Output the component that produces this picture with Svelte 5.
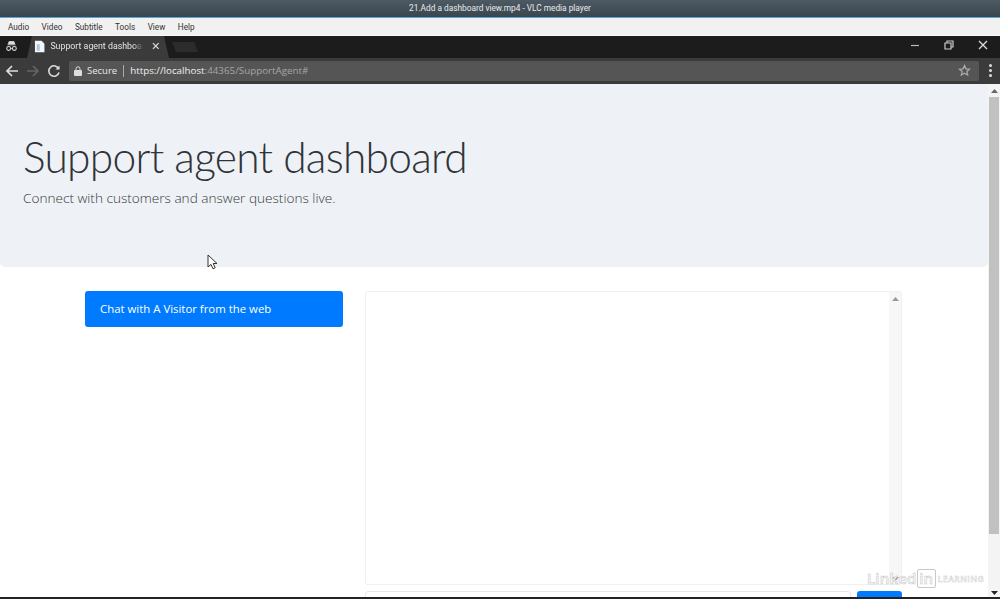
<script lang="ts">
    const menus = ['Audio', 'Video', 'Subtitle', 'Tools', 'View', 'Help'];
</script>

<div class="player">
    <header class="titlebar">21.Add a dashboard view.mp4 - VLC media player</header>

    <nav class="menubar">
        {#each menus as item}
            <span>{item}</span>
        {/each}
    </nav>

    <div class="browser">
        <div class="tabstrip">
            <svg class="incognito" width="13" height="12" viewBox="0 0 16 14" fill="none" stroke="#ddd">
                <path d="M3 5.5h10M5 1.5h6l1 3H4z" fill="#ddd" />
                <circle cx="4.5" cy="10" r="2.4" stroke-width="1.3" />
                <circle cx="11.5" cy="10" r="2.4" stroke-width="1.3" />
                <path d="M7 10h2" />
            </svg>
            <div class="tab">
                <svg width="12" height="13" viewBox="0 0 12 13">
                    <path d="M1 .5h7l3 3v9H1z" fill="#f4f6f8" />
                    <path d="M3 4h3v7H3z" fill="#a9c6e4" />
                </svg>
                <span class="tab-title">Support agent dashboard</span>
                <svg class="tab-close" width="8" height="8" viewBox="0 0 8 8" stroke="#ddd" stroke-width="1.3">
                    <path d="M1 1l6 6M7 1L1 7" />
                </svg>
            </div>
            <div class="newtab"></div>
            <div class="window-controls">
                <svg width="10" height="10" viewBox="0 0 10 10" stroke="#bbb" stroke-width="1.2">
                    <path d="M1 5.5h8" />
                </svg>
                <svg width="10" height="10" viewBox="0 0 10 10" fill="none" stroke="#ccc" stroke-width="1.2">
                    <path d="M1 3h6v6H1zM3 3V1h6v6H7" />
                </svg>
                <svg width="10" height="10" viewBox="0 0 10 10" stroke="#ddd" stroke-width="1.3">
                    <path d="M1 1l8 8M9 1l-8 8" />
                </svg>
            </div>
        </div>

        <div class="toolbar">
            <svg width="14" height="14" viewBox="0 0 14 14" fill="none" stroke="#ddd" stroke-width="1.7">
                <path d="M13 7H2M7 2L2 7l5 5" />
            </svg>
            <svg width="14" height="14" viewBox="0 0 14 14" fill="none" stroke="#666" stroke-width="1.6">
                <path d="M1 7h11M7 2l5 5-5 5" />
            </svg>
            <svg width="14" height="14" viewBox="0 0 14 14" fill="none" stroke="#ddd" stroke-width="1.6">
                <path d="M11.8 5A5.2 5.2 0 1 0 12 8.5" />
                <path d="M12.5 1.5v4h-4z" fill="#ddd" stroke="none" />
            </svg>
            <div class="omnibox">
                <svg width="8" height="10" viewBox="0 0 8 10">
                    <path d="M2 4V2.8a2 2 0 0 1 4 0V4" fill="none" stroke="#ddd" />
                    <rect y="4" width="8" height="6" rx="1" fill="#ddd" />
                </svg>
                <span class="secure">Secure</span>
                <span class="sep"></span>
                <span class="url">https://localhost<span class="dim">:44365/SupportAgent#</span></span>
                <svg class="star" width="13" height="13" viewBox="0 0 24 24" fill="none" stroke="#aaa" stroke-width="2.4">
                    <path d="M12 3l2.8 6 6.4.7-4.8 4.3 1.4 6.4L12 17.1l-5.8 3.3 1.4-6.4-4.8-4.3 6.4-.7z" />
                </svg>
            </div>
            <div class="kebab"><i></i><i></i><i></i></div>
        </div>
    </div>

    <div class="viewport">
        <main class="page">
            <section class="jumbotron">
                <h1>Support agent dashboard</h1>
                <p>Connect with customers and answer questions live.</p>
            </section>

            <div class="row">
                <div class="sidebar">
                    <button type="button" class="btn-chat">Chat with A Visitor from the web</button>
                </div>
                <div class="chat">
                    <div class="messages">
                        <div class="msg-scroll">
                            <svg width="7" height="4" viewBox="0 0 7 4"><path d="M3.5 0L7 4H0z" fill="#999" /></svg>
                            <svg width="7" height="4" viewBox="0 0 7 4"><path d="M0 0h7L3.5 4z" fill="#999" /></svg>
                        </div>
                    </div>
                    <form class="composer">
                        <input type="text" />
                        <button type="button" class="btn-send"></button>
                    </form>
                </div>
            </div>
        </main>

        <aside class="scrollbar">
            <svg width="7" height="4" viewBox="0 0 7 4"><path d="M3.5 0L7 4H0z" fill="#666" /></svg>
            <div class="thumb"></div>
            <svg width="7" height="4" viewBox="0 0 7 4"><path d="M0 0h7L3.5 4z" fill="#222" /></svg>
        </aside>

        <svg class="cursor" width="11" height="16" viewBox="0 0 11 16">
            <path d="M1 1v12l3-2.6 2 4.4 2.2-1-2-4.3H10z" fill="#fff" stroke="#333" />
        </svg>

        <div class="watermark">
            <span>Linked</span><span class="in">in</span><span class="learning">LEARNING</span>
        </div>
    </div>

    <div class="bottom-edge"></div>
</div>

<style>
    :global(body) {
        margin: 0;
        overflow: hidden;
    }

    .player {
        display: flex;
        flex-direction: column;
        width: 1000px;
        height: 599px;
        overflow: hidden;
        background: #fff;
        font-family: "Open Sans", "Noto Sans", sans-serif;
    }

    .titlebar {
        height: 17px;
        flex-shrink: 0;
        line-height: 17px;
        text-align: center;
        font-family: Roboto, sans-serif;
        font-size: 8.3px;
        color: #e8ecef;
        background: linear-gradient(#4e5a63, #3a464e);
        border-bottom: 1px solid #5ba6d8;
    }

    .menubar {
        display: flex;
        gap: 12.5px;
        height: 17px;
        flex-shrink: 0;
        padding-left: 8px;
        align-items: center;
        font-family: Roboto, sans-serif;
        font-size: 8.2px;
        color: #333;
        background: #f1f1f1;
        border-bottom: 1px solid #fafafa;
    }

    .browser {
        flex-shrink: 0;
        background: #1c1c1c;
    }

    .tabstrip {
        display: flex;
        align-items: flex-end;
        height: 22px;
        padding-left: 5px;
        overflow: hidden;
    }

    .incognito {
        margin: 0 9px 6px 0;
    }

    .tab {
        display: flex;
        align-items: center;
        gap: 5px;
        width: 142px;
        height: 22px;
        box-sizing: border-box;
        padding: 0 9px 2px 7px;
        background: #3b3b3b;
        clip-path: polygon(0 100%, 5px 0, calc(100% - 5px) 0, 100% 100%);
    }

    .tab-title {
        width: 98px;
        overflow: hidden;
        white-space: nowrap;
        font-family: Roboto, sans-serif;
        font-size: 8.8px;
        color: #e4e4e4;
        mask-image: linear-gradient(90deg, #000 90%, transparent);
    }

    .tab-close {
        margin-left: 4px;
    }

    .newtab {
        width: 22px;
        height: 10px;
        margin: 0 0 6px 5px;
        background: #2c2c2c;
        transform: skewX(20deg);
    }

    .window-controls {
        display: flex;
        gap: 24px;
        margin-left: auto;
        padding: 0 12px 8px 0;
    }

    .toolbar {
        display: flex;
        align-items: center;
        gap: 7px;
        height: 25px;
        padding: 0 8px 1px 5px;
        background: #3b3b3b;
    }

    .omnibox {
        display: flex;
        align-items: center;
        flex: 1;
        height: 20px;
        margin-left: 1px;
        padding: 0 8px 0 5px;
        border-radius: 2px;
        background: #555;
        font-size: 9.5px;
    }

    .secure {
        margin-left: 5px;
        color: #e8e8e8;
    }

    .sep {
        width: 1px;
        height: 12px;
        margin: 0 6px;
        background: #aaa;
    }

    .url {
        font-size: 9.8px;
        color: #f0f0f0;
    }

    .dim {
        color: #a5a5a5;
    }

    .star {
        margin-left: auto;
    }

    .kebab {
        display: flex;
        flex-direction: column;
        gap: 2px;
        margin-left: 3px;
    }

    .kebab i {
        width: 3px;
        height: 3px;
        border-radius: 50%;
        background: #ddd;
    }

    .viewport {
        position: relative;
        display: flex;
        flex: 1;
        min-height: 0;
        overflow: hidden;
    }

    .page {
        flex: 1;
        min-width: 0;
    }

    .jumbotron {
        box-sizing: border-box;
        height: 183px;
        padding: 48px 23px 0;
        background: #eef1f5;
        border-radius: 0 0 5px 5px;
    }

    h1 {
        margin: 0;
        font-family: Lato, "Open Sans", sans-serif;
        font-size: 42.5px;
        letter-spacing: -0.75px;
        line-height: 50px;
        font-weight: 300;
        color: #2f3439;
    }

    p {
        margin: 7px 0 0;
        font-size: 13.6px;
        line-height: 18px;
        font-weight: 300;
        color: #343a40;
    }

    .row {
        display: flex;
        gap: 22px;
        padding: 24px 86px 0 85px;
    }

    .sidebar {
        width: 258px;
        flex-shrink: 0;
    }

    .btn-chat {
        width: 100%;
        height: 36px;
        padding: 0 15px 2px;
        border: 0;
        border-radius: 3px;
        background: #007bff;
        color: #fff;
        font: inherit;
        font-size: 11.4px;
        text-align: left;
    }

    .chat {
        flex: 1;
        min-width: 0;
    }

    .messages {
        display: flex;
        justify-content: flex-end;
        height: 292px;
        border: 1px solid #f0f0f0;
        border-radius: 3px;
    }

    .msg-scroll {
        display: flex;
        flex-direction: column;
        justify-content: space-between;
        align-items: center;
        width: 12px;
        padding: 5px 0 3px;
        background: #f7f7f7;
    }

    .composer {
        display: flex;
        gap: 6px;
        margin-top: 6px;
    }

    .composer input {
        flex: 1;
        min-width: 0;
        height: 36px;
        box-sizing: border-box;
        border: 1px solid #e8e8e8;
        border-radius: 3px;
    }

    .btn-send {
        width: 45px;
        height: 36px;
        border: 0;
        border-radius: 3px;
        background: #007bff;
    }

    .scrollbar {
        display: flex;
        flex-direction: column;
        align-items: center;
        width: 12px;
        flex-shrink: 0;
        padding: 5px 0 2px;
        box-sizing: border-box;
        background: #f4f4f4;
    }

    .thumb {
        width: 10px;
        height: 437px;
        margin: 4px 0 auto;
        background: #c1c1c1;
    }

    .cursor {
        position: absolute;
        left: 207px;
        top: 170px;
    }

    .watermark {
        position: absolute;
        left: 867px;
        top: 484px;
        display: flex;
        align-items: center;
        font-size: 15px;
        font-weight: 600;
        color: #fff;
        letter-spacing: 0.2px;
        -webkit-text-stroke: 0.6px #c8c8c8;
    }

    .in {
        padding: 0 1.5px;
        border: 1px solid #c8c8c8;
        border-radius: 2px;
        line-height: 17px;
    }

    .learning {
        margin-left: 2px;
        font-size: 8.5px;
        letter-spacing: 0.5px;
        -webkit-text-stroke: 0.4px #c8c8c8;
    }

    .bottom-edge {
        height: 2px;
        flex-shrink: 0;
        background: #222;
    }
</style>
